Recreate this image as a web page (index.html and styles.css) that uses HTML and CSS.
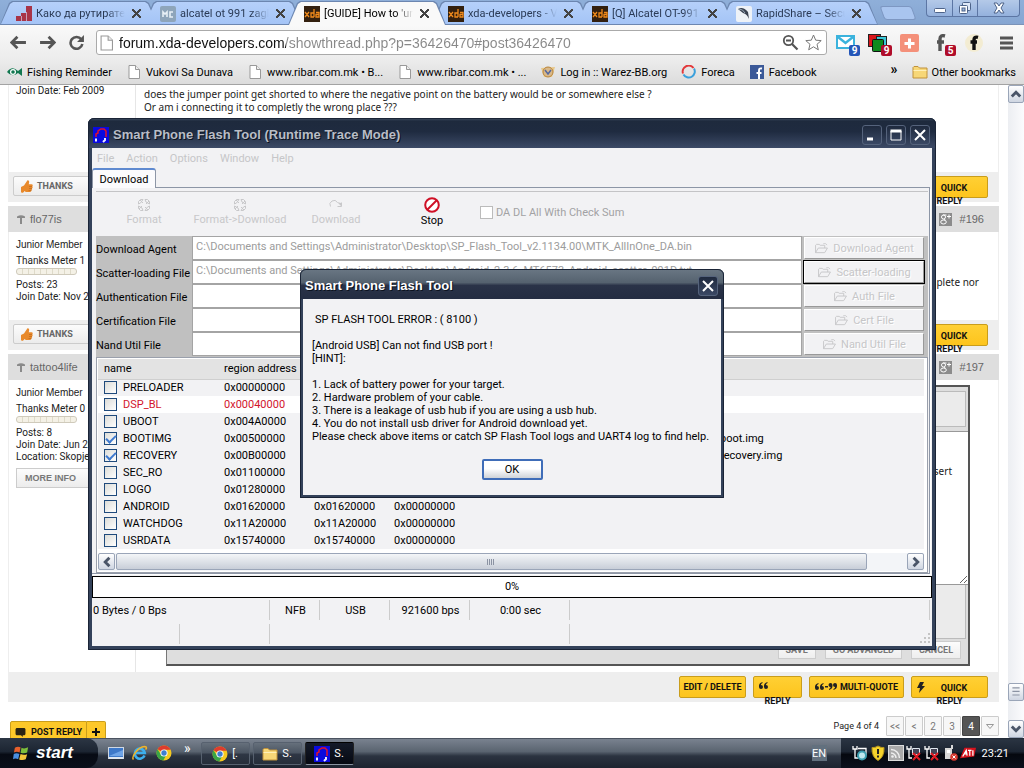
FILE: index.html
```html
<!DOCTYPE html>
<html lang="en">
<head>
    <meta charset="UTF-8">
    <meta name="viewport" content="width=device-width, initial-scale=1.0">
    <title>[GUIDE] How to 'unbrick'</title>
    <link rel="stylesheet" href="styles.css">
</head>
<body>

<svg class="sprites" aria-hidden="true">
    <symbol id="page" viewBox="0 0 12 14">
        <path d="M1 .5h6.500l4 4v9H1z" fill="#fff" stroke="#999"/>
        <path d="M7.500 .5v4h4" fill="#eee" stroke="#999"/>
    </symbol>
    <symbol id="xda" viewBox="0 0 16 16">
        <rect width="16" height="16" fill="#33200f"/>
        <path d="M1 6l4 5M5 6l-4 5M10 3v8M10 7H7v4h3M12 6.500h3V11h-3V8.500h3" fill="none" stroke="#f08a1c" stroke-width="1.300"/>
    </symbol>
    <symbol id="chrome" viewBox="0 0 16 16">
        <circle cx="8" cy="8" r="7.500" fill="#f6c91f"/>
        <path d="M8 8L1.500 4.200A7.500 7.500 0 0 1 14.700 4.700H8z" fill="#de3c2e"/>
        <path d="M1.500 4.200A7.500 7.500 0 0 0 7.300 15.500L10.500 9.500 8 8 4.800 9.300z" fill="#3aa547"/>
        <circle cx="8" cy="8" r="3.600" fill="#fff"/>
        <circle cx="8" cy="8" r="2.700" fill="#3f7fd0"/>
    </symbol>
    <symbol id="flash" viewBox="0 0 16 16">
        <rect width="16" height="16" fill="#0a0adf"/>
        <path d="M3 10V7l2-1V4l3-2h3l2 2v6" fill="none" stroke="#e0122a" stroke-width="1.500"/>
        <path d="M3 11.500v3M12 11v2l-2 2" fill="none" stroke="#e8e8ff" stroke-width="2"/>
    </symbol>
    <symbol id="folder" viewBox="0 0 16 14">
        <path d="M1 2.500l1-1h4l1.500 1.500H15v10H1z" fill="#f7d777" stroke="#c0913a"/>
        <path d="M1.500 5.500h13" stroke="#fff0b8"/>
    </symbol>
    <symbol id="open" viewBox="0 0 16 12">
        <path d="M1.500 10.500v-8l1-1h3l1 1h5v3M1.500 10.500l3-5h10l-3 5zM10 .8c2-.8 3 0 4 1.500" fill="none" stroke="currentColor"/>
    </symbol>
    <symbol id="cycle" viewBox="0 0 14 14">
        <path d="M1.500 6V3.500l2-2H6L3.500 5zM8 1.500h2.500l2 2V6L9 4zM12.500 8v2.500l-2 2H8L10.500 9zM6 12.500H3.500l-2-2V8L5 10z" fill="none" stroke="currentColor"/>
        <path d="M3 2l3 3M12 3L9 6M11 12L8 9M2 11l3-3" stroke="currentColor"/>
    </symbol>
    <symbol id="thumb" viewBox="0 0 12 13">
        <path d="M0 7l3-1.500V12L1 13 0 12zM3 5.500L6.500 .3c2 0 2 2 1.200 4h2.800c1.500 0 1.500 1.500.8 2 .6.700.4 1.700-.3 2 .4.800 0 1.600-.6 1.800.2 1-.4 1.900-1.400 1.900H5L3 11z" fill="#e8892b"/>
        <path d="M8 6.500h3M8 8.500h3M7.500 10.500h3" stroke="#b9641a" stroke-width=".6"/>
    </symbol>
    <symbol id="pin" viewBox="0 0 8 9">
        <path d="M0 1.500Q4 -.8 8 1.500V3H5v6H3V3H0z" fill="#8a8a8a"/>
    </symbol>
    <symbol id="gplus" viewBox="0 0 13 13">
        <rect width="13" height="13" fill="#8c8c8c"/>
        <circle cx="4.500" cy="4" r="2" fill="none" stroke="#fff"/>
        <ellipse cx="4.500" cy="9" rx="2.800" ry="2" fill="none" stroke="#fff"/>
        <path d="M5.500 6l.5 1.200M8 3.500h4M10 1.500v4M4 2h3.500" stroke="#fff"/>
    </symbol>
    <symbol id="net" viewBox="0 0 16 16">
        <path d="M1 1v3h4V1M3 4v9h3" fill="none" stroke="#fff" stroke-width="1.300"/>
        <path d="M6.500 3.500h7v6h-7zM8 12.500h4" fill="#445" stroke="#dfe6ee"/>
        <path d="M7 8l7 7M14 8l-7 7" stroke="#e01a22" stroke-width="2"/>
    </symbol>
    <symbol id="bolt" viewBox="0 0 8 11">
        <path d="M3 0h4L5 4h3L2 11l1-5H0z" fill="#222"/>
    </symbol>
    <symbol id="quote" viewBox="0 0 9 7">
        <path d="M3.500 0C0 1 0 3 0 5a2 2 0 1 0 2-2c0-1 .5-1.500 1.500-2zM8.500 0C5 1 5 3 5 5a2 2 0 1 0 2-2c0-1 .5-1.500 1.500-2z" fill="#222"/>
    </symbol>
</svg>

<div class="desktop">

    <!-- browser -->
    <div class="browser">
        <div class="tabstrip">
            <div class="tab">
                <svg class="favicon" viewBox="0 0 16 16"><path d="M0 10h5v5H0zM5 7h5v8H5zM10 0h6v15h-6z" fill="#a83448"/><path d="M5.500 10v5M10.500 6v9" stroke="#c8a0b8"/></svg>
                <span class="tab-title">Како да рутирате</span>
                <button class="tab-close" aria-label="Close tab"></button>
            </div>
            <div class="tab">
                <svg class="favicon" viewBox="0 0 16 16"><rect width="16" height="16" rx="2" fill="#8ea5ba"/><path d="M3 11V6l2 2 2-2v5M13 6h-3v5h3" fill="none" stroke="#e8f0f6" stroke-width="1.600"/></svg>
                <span class="tab-title">alcatel ot 991 zagl</span>
                <button class="tab-close" aria-label="Close tab"></button>
            </div>
            <div class="tab active">
                <svg class="favicon"><use href="#xda"/></svg>
                <span class="tab-title">[GUIDE] How to 'un</span>
                <button class="tab-close" aria-label="Close tab"></button>
            </div>
            <div class="tab">
                <svg class="favicon"><use href="#xda"/></svg>
                <span class="tab-title">xda-developers - V</span>
                <button class="tab-close" aria-label="Close tab"></button>
            </div>
            <div class="tab">
                <svg class="favicon"><use href="#xda"/></svg>
                <span class="tab-title">[Q] Alcatel OT-991</span>
                <button class="tab-close" aria-label="Close tab"></button>
            </div>
            <div class="tab">
                <svg class="favicon" viewBox="0 0 16 16"><rect width="16" height="16" rx="2" fill="#eef2f7"/><path d="M2 3q5-3 10 3l1 7q-2-5-6-6z" fill="#3a4250"/><path d="M3 3q4 0 6 4" stroke="#9ab" fill="none"/></svg>
                <span class="tab-title">RapidShare – Secu</span>
                <button class="tab-close" aria-label="Close tab"></button>
            </div>
            <button class="new-tab" aria-label="New tab"></button>
            <div class="chrome-controls">
                <button aria-label="Minimize"><svg viewBox="0 0 12 12"><rect x=".5" y="6.500" width="11" height="4" rx="1" fill="#fff" stroke="#4d6389"/></svg></button>
                <button aria-label="Restore"><svg viewBox="0 0 12 12"><rect x="3.500" y=".5" width="8" height="8" rx="1" fill="#dfe9f8" stroke="#4d6389"/><rect x=".5" y="3.500" width="8" height="8" rx="1" fill="#fff" stroke="#4d6389"/><rect x="3" y="6" width="3" height="3" fill="#9cb6dd" stroke="#4d6389"/></svg></button>
                <button class="wide" aria-label="Close"><svg viewBox="0 0 12 12"><path d="M1 1h3l2 3 2-3h3L8 6l3 5H8L6 8l-2 3H1l3-5z" fill="#fff" stroke="#4d6389"/></svg></button>
            </div>
        </div>

        <div class="toolbar">
            <button class="nav" aria-label="Back"><svg viewBox="0 0 16 14"><path d="M1.500 7H15M7 1.500L1.500 7 7 12.500" fill="none" stroke="#555" stroke-width="2.600"/></svg></button>
            <button class="nav" aria-label="Forward"><svg viewBox="0 0 16 14"><path d="M1 7h13.500M9 1.500L14.500 7 9 12.500" fill="none" stroke="#555" stroke-width="2.600"/></svg></button>
            <button class="nav" aria-label="Reload"><svg viewBox="0 0 16 14"><path d="M12.500 4A5.600 5.600 0 1 0 13.500 8.500" fill="none" stroke="#555" stroke-width="2.400"/><path d="M15 0v6.500H8.500z" fill="#555"/></svg></button>
            <div class="omnibox">
                <svg class="page-icon"><use href="#page"/></svg>
                <input type="text" aria-label="Address" value="forum.xda-developers.com/showthread.php?p=36426470#post36426470">
                <svg class="omni-icon" viewBox="0 0 17 17"><circle cx="6.500" cy="6.500" r="4.700" fill="none" stroke="#555" stroke-width="1.800"/><path d="M4 6.500h5M10 10l5.500 5.500" stroke="#555" stroke-width="2.200"/></svg>
                <svg class="omni-icon" viewBox="0 0 17 17"><path d="M8.500 1l2.200 5.200 5.500.4-4.200 3.700 1.300 5.500-4.800-3-4.800 3L5 10.300.8 6.600l5.500-.4z" fill="#fff" stroke="#777"/></svg>
            </div>
            <div class="extensions">
                <button aria-label="Mail" class="ext"><svg viewBox="0 0 20 18"><rect x="1" y="2" width="17" height="12" fill="#fff" stroke="#3bb3dd" stroke-width="2"/><path d="M2 3l7.500 6L17 3" fill="none" stroke="#3bb3dd" stroke-width="2.500"/></svg><span class="badge blue">9</span></button>
                <button aria-label="Cards" class="ext"><svg viewBox="0 0 20 18"><rect x=".5" y=".5" width="12" height="12" fill="#d8161c" stroke="#222"/><rect x="8.500" y="2.500" width="10" height="10" fill="#3ac8d8" stroke="#222"/><rect x="4.500" y="5.500" width="11" height="12" rx="1" fill="#0e8a1e" stroke="#111"/></svg><span class="badge red">9</span></button>
                <button aria-label="Add" class="ext"><svg viewBox="0 0 20 18"><rect width="19" height="18" rx="2" fill="#f4907a"/><path d="M9.500 4.500v10M4.500 9.500h10" stroke="#fff" stroke-width="3"/></svg></button>
                <button aria-label="Facebook notifications" class="ext"><svg viewBox="0 0 20 18"><path d="M13 2C9.500 1 8 2.500 8 5v12M5 8h7" fill="none" stroke="#555" stroke-width="3.400"/></svg><span class="badge red">5</span></button>
                <button aria-label="Facebook" class="ext"><svg viewBox="0 0 20 18"><circle cx="10" cy="9" r="9" fill="#f3ecd2"/><path d="M14 3.300C11 2.500 10 4 10 6v10M6.500 8h6.500" fill="none" stroke="#111" stroke-width="3.400"/></svg></button>
                <button aria-label="Menu" class="ext"><svg viewBox="0 0 20 18"><path d="M4 4h13M4 9h13M4 14h13" stroke="#555" stroke-width="3"/></svg></button>
            </div>
        </div>

        <nav class="bookmarks">
            <a href="#"><svg class="bm-icon" viewBox="0 0 16 14"><path d="M0 7q5-7 11-1l4-3v8l-4-3q-6 5-11-1z" fill="#127850"/><circle cx="6" cy="7" r="3" fill="#fff"/><circle cx="6" cy="7" r="1.800" fill="#127850"/></svg>Fishing Reminder</a>
            <a href="#"><svg class="bm-icon"><use href="#page"/></svg>Vukovi Sa Dunava</a>
            <a href="#"><svg class="bm-icon"><use href="#page"/></svg>www.ribar.com.mk • B...</a>
            <a href="#"><svg class="bm-icon"><use href="#page"/></svg>www.ribar.com.mk • ...</a>
            <a href="#"><svg class="bm-icon" viewBox="0 0 16 14"><path d="M1 3l14-1-3 10H4z" fill="#e8c88a"/><circle cx="8" cy="7" r="5" fill="#d9b98a" stroke="#b9853a"/><path d="M5 5l3 4 3-4" fill="none" stroke="#5468a0" stroke-width="1.500"/></svg>Log in :: Warez-BB.org</a>
            <a href="#"><svg class="bm-icon" viewBox="0 0 16 14"><path d="M2 8.500A6 6 0 0 1 12.500 3" fill="none" stroke="#e2383b" stroke-width="2"/><path d="M13 3.500A6 6 0 0 1 2.500 9.500" fill="none" stroke="#3aa0dc" stroke-width="2"/></svg>Foreca</a>
            <a href="#"><svg class="bm-icon" viewBox="0 0 14 14"><rect width="14" height="14" fill="#3b5998"/><path d="M12 3.500C9.500 3 9 4 9 6v8M6.500 8h5" fill="none" stroke="#fff" stroke-width="2"/></svg>Facebook</a>
            <button class="more">»</button>
            <a href="#" class="other"><svg class="bm-icon"><use href="#folder"/></svg>Other bookmarks</a>
        </nav>

        <div class="viewport">
            <main class="forum">
                <article class="post">
                    <div class="post-body first">
                        <div class="user"><p>Join Date: Feb 2009</p></div>
                        <div class="message">does the jumper point get shorted to where the negative point on the battery would be or somewhere else ?<br>Or am i connecting it to completly the wrong place ???</div>
                    </div>
                    <footer class="post-foot">
                        <button class="thanks"><svg><use href="#thumb"/></svg>THANKS</button>
                        <a href="#" class="btn quick"><svg><use href="#bolt"/></svg>QUICK REPLY</a>
                    </footer>
                </article>

                <article class="post">
                    <header class="post-head"><svg class="pin"><use href="#pin"/></svg>flo77is<span class="spacer"></span><svg class="gplus"><use href="#gplus"/></svg><a href="#">#196</a></header>
                    <div class="post-body middle">
                        <div class="user">
                            <p class="rank">Junior Member</p>
                            <p class="meter-label">Thanks Meter 1</p>
                            <div class="meter"></div>
                            <p>Posts: 23</p>
                            <p>Join Date: Nov 2011</p>
                        </div>
                        <div class="message right">is not complete nor</div>
                    </div>
                    <footer class="post-foot">
                        <button class="thanks"><svg><use href="#thumb"/></svg>THANKS</button>
                        <a href="#" class="btn quick"><svg><use href="#bolt"/></svg>QUICK REPLY</a>
                    </footer>
                </article>

                <article class="post">
                    <header class="post-head"><svg class="pin"><use href="#pin"/></svg>tattoo4life<span class="spacer"></span><svg class="gplus"><use href="#gplus"/></svg><a href="#">#197</a></header>
                    <div class="post-body last">
                        <div class="user">
                            <p class="rank">Junior Member</p>
                            <p class="meter-label">Thanks Meter 0</p>
                            <div class="meter"></div>
                            <p>Posts: 8</p>
                            <p>Join Date: Jun 2010</p>
                            <p>Location: Skopje</p>
                            <button class="more-info">MORE INFO</button>
                        </div>
                        <div class="editor">
                            <div class="editor-tools"></div>
                            <textarea aria-label="Message">


insert</textarea>
                            <div class="editor-options"></div>
                            <div class="editor-actions">
                                <button>SAVE</button>
                                <button>GO ADVANCED</button>
                                <button>CANCEL</button>
                            </div>
                        </div>
                    </div>
                    <footer class="post-foot">
                        <span class="spacer"></span>
                        <a href="#" class="btn edit">EDIT / DELETE</a>
                        <a href="#" class="btn reply"><svg class="q"><use href="#quote"/></svg>REPLY</a>
                        <a href="#" class="btn multi"><svg class="qq" viewBox="0 0 22 7"><path d="M3.500 0C0 1 0 3 0 5a2 2 0 1 0 2-2c0-1 .5-1.500 1.500-2zM8.500 0C5 1 5 3 5 5a2 2 0 1 0 2-2c0-1 .5-1.500 1.500-2zM10 3h3v1.500h-3zM14 7c3.500-1 3.500-3 3.500-5a2 2 0 1 0-2 2c0 1-.5 1.500-1.500 2zM18.500 7c3.500-1 3.500-3 3.500-5a2 2 0 1 0-2 2c0 1-.5 1.500-1.500 2z" fill="#222"/></svg>MULTI-QUOTE</a>
                        <a href="#" class="btn quick"><svg><use href="#bolt"/></svg>QUICK REPLY</a>
                    </footer>
                </article>

                <div class="thread-foot">
                    <a href="#" class="post-reply"><svg viewBox="0 0 11 10"><path d="M1 0h9l1 1v6l-1 1H8v2L6 8H1L0 7V1z" fill="#2a2414"/></svg>POST REPLY</a>
                    <a href="#" class="post-plus" aria-label="More"><svg viewBox="0 0 8 8"><path d="M4 0v8M0 4h8" stroke="#111" stroke-width="2"/></svg></a>
                    <span class="spacer"></span>
                    <span class="page-of">Page 4 of 4</span>
                    <div class="pages">
                        <a href="#">&lt;&lt;</a>
                        <a href="#">&lt;</a>
                        <a href="#">2</a>
                        <a href="#">3</a>
                        <a href="#" class="current">4</a>
                        <a href="#" aria-label="Jump"><svg viewBox="0 0 8 5"><path d="M.5.5h7L4 4.500z" fill="none" stroke="#999"/></svg></a>
                    </div>
                </div>
            </main>
            <div class="scrollbar">
                <button aria-label="Scroll up"><svg viewBox="0 0 10 10"><path d="M1.500 7L5 3.500 8.500 7" fill="none" stroke="#4a5568" stroke-width="2.400"/></svg></button>
                <button class="thumb" aria-label="Scroll position"><svg viewBox="0 0 10 10"><path d="M2 1.500h6M2 4.500h6M2 7.500h6" stroke="#8b93a3"/></svg></button>
                <button aria-label="Scroll down"><svg viewBox="0 0 10 10"><path d="M1.500 3L5 6.500 8.500 3" fill="none" stroke="#4a5568" stroke-width="2.400"/></svg></button>
            </div>
        </div>
    </div>

    <!-- flash tool -->
    <section class="window tool">
        <header class="titlebar">
            <svg class="app-icon"><use href="#flash"/></svg>
            <h1>Smart Phone Flash Tool (Runtime Trace Mode)</h1>
            <button aria-label="Minimize"><svg viewBox="0 0 12 12"><path d="M1 10h6" stroke="#fff" stroke-width="3"/></svg></button>
            <button aria-label="Maximize"><svg viewBox="0 0 12 12"><path d="M1 2v9h10V2" fill="none" stroke="#fff"/><path d="M.5 2h11" stroke="#fff" stroke-width="3"/></svg></button>
            <button aria-label="Close"><svg viewBox="0 0 12 12"><path d="M1 1l10 10M11 1L1 11" stroke="#fff" stroke-width="2"/></svg></button>
        </header>
        <nav class="menu">
            <button disabled>File</button>
            <button disabled>Action</button>
            <button disabled>Options</button>
            <button disabled>Window</button>
            <button disabled>Help</button>
        </nav>
        <div class="tool-tabs"><button>Download</button></div>
        <div class="panel">
            <div class="actions">
                <button disabled><svg><use href="#cycle"/></svg>Format</button>
                <button disabled><svg><use href="#cycle"/></svg>Format-&gt;Download</button>
                <button disabled><svg viewBox="0 0 14 14"><path d="M1.500 8.500a4 4 0 0 1 7-4" fill="none" stroke="currentColor"/><path d="M8.500 8.500h4v-4" fill="none" stroke="currentColor"/><path d="M8 4l4 4V5z" fill="currentColor"/></svg>Download</button>
                <button class="stop"><svg viewBox="0 0 16 16"><circle cx="8" cy="8" r="6.800" fill="#fff" stroke="#cf1026" stroke-width="2"/><path d="M3.500 12.500l9-9" stroke="#cf1026" stroke-width="2"/></svg>Stop</button>
                <label class="check"><input type="checkbox" disabled>DA DL All With Check Sum</label>
            </div>

            <div class="fields">
                <label for="agent">Download Agent</label>
                <input id="agent" type="text" disabled value="C:\Documents and Settings\Administrator\Desktop\SP_Flash_Tool_v2.1134.00\MTK_AllInOne_DA.bin">
                <button disabled><svg><use href="#open"/></svg>Download Agent</button>
                <label for="scatter">Scatter-loading File</label>
                <input id="scatter" type="text" disabled value="C:\Documents and Settings\Administrator\Desktop\Android_2.3.6_MT6573_Android_scatter_991D.txt">
                <button disabled class="default"><svg><use href="#open"/></svg>Scatter-loading</button>
                <label for="auth">Authentication File</label>
                <input id="auth" type="text" disabled>
                <button disabled><svg><use href="#open"/></svg>Auth File</button>
                <label for="cert">Certification File</label>
                <input id="cert" type="text" disabled>
                <button disabled><svg><use href="#open"/></svg>Cert File</button>
                <label for="nand">Nand Util File</label>
                <input id="nand" type="text" disabled>
                <button disabled><svg><use href="#open"/></svg>Nand Util File</button>
            </div>

            <div class="list">
                <table>
                    <colgroup><col class="c-name"><col class="c-region"><col class="c-begin"><col class="c-end"><col></colgroup>
                    <thead>
                        <tr><th>name</th><th>region address</th><th>begin address</th><th>end address</th><th></th></tr>
                    </thead>
                    <tbody>
                        <tr><td><label><input type="checkbox">PRELOADER</label></td><td>0x00000000</td><td>0x00000000</td><td>0x00000000</td><td></td></tr>
                        <tr class="missing"><td><label><input type="checkbox">DSP_BL</label></td><td>0x00040000</td><td>0x00000000</td><td>0x00000000</td><td></td></tr>
                        <tr><td><label><input type="checkbox">UBOOT</label></td><td>0x004A0000</td><td>0x004A0000</td><td>0x00000000</td><td></td></tr>
                        <tr><td><label><input type="checkbox" checked>BOOTIMG</label></td><td>0x00500000</td><td>0x00500000</td><td>0x00000000</td><td>boot.img</td></tr>
                        <tr><td><label><input type="checkbox" checked>RECOVERY</label></td><td>0x00B00000</td><td>0x00B00000</td><td>0x00000000</td><td>recovery.img</td></tr>
                        <tr><td><label><input type="checkbox">SEC_RO</label></td><td>0x01100000</td><td>0x01100000</td><td>0x00000000</td><td></td></tr>
                        <tr><td><label><input type="checkbox">LOGO</label></td><td>0x01280000</td><td>0x01280000</td><td>0x00000000</td><td></td></tr>
                        <tr><td><label><input type="checkbox">ANDROID</label></td><td>0x01620000</td><td>0x01620000</td><td>0x00000000</td><td></td></tr>
                        <tr><td><label><input type="checkbox">WATCHDOG</label></td><td>0x11A20000</td><td>0x11A20000</td><td>0x00000000</td><td></td></tr>
                        <tr><td><label><input type="checkbox">USRDATA</label></td><td>0x15740000</td><td>0x15740000</td><td>0x00000000</td><td></td></tr>
                    </tbody>
                </table>
                <div class="hscroll">
                    <button aria-label="Scroll left"><svg viewBox="0 0 10 10"><path d="M7 1.500L3.500 5 7 8.500" fill="none" stroke="#4a5568" stroke-width="2.400"/></svg></button>
                    <div class="track"><button class="bar" aria-label="Scroll position"><svg viewBox="0 0 8 8"><path d="M.5 1v6M2.500 1v6M4.500 1v6M6.500 1v6" stroke="#8b93a3"/></svg></button></div>
                    <button aria-label="Scroll right"><svg viewBox="0 0 10 10"><path d="M3 1.500L6.500 5 3 8.500" fill="none" stroke="#4a5568" stroke-width="2.400"/></svg></button>
                </div>
            </div>
        </div>
        <div class="progress">0%</div>
        <div class="status">
            <span class="bytes">0 Bytes / 0 Bps</span>
            <span class="flash">NFB</span>
            <span class="port">USB</span>
            <span class="baud">921600 bps</span>
            <span class="time">0:00 sec</span>
            <span class="rest"></span>
        </div>
        <div class="status lower">
            <span class="chip"></span>
            <span class="dram"></span>
            <span class="path"></span>
            <svg class="grip" viewBox="0 0 12 12"><path d="M8 1h2v2H8zM8 5h2v2H8zM4 5h2v2H4zM8 9h2v2H8zM4 9h2v2H4zM0 9h2v2H0z" fill="#c4c4c4"/></svg>
        </div>
    </section>

    <!-- error box -->
    <section class="window dialog" role="dialog" aria-label="Smart Phone Flash Tool">
        <header class="titlebar">
            <h2>Smart Phone Flash Tool</h2>
            <button aria-label="Close"><svg viewBox="0 0 12 12"><path d="M1 1l10 10M11 1L1 11" stroke="#fff" stroke-width="2"/></svg></button>
        </header>
        <div class="dialog-body">
            <p class="indent">SP FLASH TOOL ERROR : ( 8100 )</p>
            <br>
            <p>[Android USB] Can not find USB port !</p>
            <p>[HINT]:</p>
            <br>
            <p>1. Lack of battery power for your target.</p>
            <p>2. Hardware problem of your cable.</p>
            <p>3. There is a leakage of usb hub if you are using a usb hub.</p>
            <p>4. You do not install usb driver for Android download yet.</p>
            <p>Please check above items or catch SP Flash Tool logs and UART4 log to find help.</p>
            <button class="ok">OK</button>
        </div>
    </section>
</div>

<!-- taskbar -->
<footer class="taskbar">
    <button class="start"><svg viewBox="0 0 18 18"><path d="M2 3q3-2 6-.5L7 8Q4 6.500 1 8z" fill="#e8602c"/><path d="M9 3q3 1.500 7-.5L15 8q-3 1.500-7 .3z" fill="#7ebf3c"/><path d="M.8 9.500q3-1.500 6 0L5.500 15q-3-1.500-5.500 0z" fill="#4a8fe0"/><path d="M8 9.500q3 1.500 7 .3L13.500 15q-3 1.500-7 .3z" fill="#f4c63a"/></svg>start</button>
    <div class="quick-launch">
        <button aria-label="Show desktop"><svg viewBox="0 0 16 16"><rect x=".5" y="2.500" width="15" height="11" fill="#3d78c8" stroke="#cfd8e4"/><path d="M1 11l14-6v6z" fill="#6fa4e6"/><path d="M1 13h14" stroke="#dfe6ee" stroke-width="2"/></svg></button>
        <button aria-label="Internet Explorer"><svg viewBox="0 0 16 16"><path d="M12.500 10.500a5 5 0 1 1 .3-2.500H4" fill="none" stroke="#3db0ee" stroke-width="2.600"/><path d="M1.500 14.500C-1 12 6 2 12.500 1.500c3 0 2 2 1 3" fill="none" stroke="#f0b429" stroke-width="1.500"/></svg></button>
        <button aria-label="Chrome"><svg><use href="#chrome"/></svg></button>
        <button class="expand">»</button>
    </div>
    <div class="tasks">
        <button><svg><use href="#chrome"/></svg>[.</button>
        <button><svg><use href="#folder"/></svg>S.</button>
        <button class="pressed"><svg><use href="#flash"/></svg>S.</button>
    </div>
    <span class="spacer"></span>
    <button class="lang">EN</button>
    <div class="tray">
        <svg viewBox="0 0 16 16"><path d="M1 1v3h4V1M3 4v9h3M6 3.500h8V10" fill="none" stroke="#fff" stroke-width="1.300"/><circle cx="10" cy="10.500" r="4" fill="#bfe8ee" stroke="#3c9fb0" stroke-width="2"/></svg>
        <svg viewBox="0 0 16 16"><path d="M8 1q3 2 6 1.500Q14.500 12 8 15.500 1.500 12 2 2.500 5 3 8 1z" fill="#f5d32c" stroke="#b8961c"/><path d="M8 4v5M8 10.500v2" stroke="#222" stroke-width="2"/></svg>
        <svg viewBox="0 0 16 16"><rect x=".5" y=".5" width="15" height="15" fill="#a9a9a9" stroke="#ddd"/><path d="M3 8a5 5 0 0 1 5 5M3 4.500A8.500 8.500 0 0 1 11.500 13" fill="none" stroke="#eee" stroke-width="1.500"/><circle cx="4.500" cy="11.500" r="1.300" fill="#eee"/></svg>
        <svg><use href="#net"/></svg>
        <svg><use href="#net"/></svg>
        <svg viewBox="0 0 16 16"><path d="M3 3h7v11H3zM9 0h2v4H9z" fill="#d8d8d8"/><path d="M5 5h3v3H5z" fill="#fff"/><circle cx="12" cy="12" r="3.800" fill="#d8392f"/><path d="M10.500 10.500l3 3M13.500 10.500l-3 3" stroke="#fff"/></svg>
        <svg viewBox="0 0 18 16"><path d="M5 2h13l-2 10-9 1-7 1z" fill="#d5131d"/><path d="M3 12l4-7 1 6M4.500 9h3M9 5h4M11 5v6M14.500 5v6" fill="none" stroke="#fff" stroke-width="1.400"/></svg>
        <span class="clock">23:21</span>
    </div>
</footer>

</body>
</html>
```

FILE: styles.css
```css
* {
    box-sizing: border-box;
}
body {
    display: flex;
    flex-direction: column;
    height: 100vh;
    margin: 0;
    overflow: hidden;
    font-family: Roboto, 'Liberation Sans', Arial, sans-serif;
    font-size: 11px;
    color: #000;
    background-color: #fff;
}
button, input, textarea {
    font: inherit;
    color: inherit;
}
button {
    display: flex;
    align-items: center;
    justify-content: center;
    padding: 0;
    border: none;
    background: none;
}
a {
    color: inherit;
    text-decoration: none;
}
p, h1, h2 {
    margin: 0;
}
svg {
    flex: none;
}
.sprites {
    position: absolute;
    width: 0;
    height: 0;
}
.spacer {
    flex: 1;
}
.desktop {
    position: relative;
    flex: 1;
    min-height: 0;
}

/* browser */
.browser {
    display: flex;
    flex-direction: column;
    height: 100%;
}
.tabstrip {
    display: flex;
    flex: none;
    height: 25px;
    background: linear-gradient(#8fafd9, #86a6d2);
    border-bottom: 1px solid #7b93b8;
}
.tab {
    position: relative;
    display: flex;
    align-items: center;
    gap: 4px;
    width: 158px;
    height: 25px;
    padding: 2px 15px 0 16px;
    color: #2a3a55;
}
.tab + .tab {
    margin-left: -14px;
}
.tab::before, .tab::after {
    content: "";
    position: absolute;
    inset: 1px 0 0;
    background-color: #6c86b0;
    clip-path: polygon(0 100%, 9px 2px, 12px 0, calc(100% - 12px) 0, calc(100% - 9px) 2px, 100% 100%);
}
.tab::after {
    inset: 2px 1px 1px;
    background: linear-gradient(#b5d0fa, #a4c4f6);
}
.tab > * {
    position: relative;
    z-index: 2;
}
.tab::after {
    z-index: 1;
}
.tab.active {
    z-index: 3;
    color: #000;
}
.tab.active::after {
    inset: 2px 1px 0;
    background: #f9f9f9;
}
.favicon {
    width: 16px;
    height: 16px;
}
.tab-title {
    flex: 1;
    overflow: hidden;
    white-space: nowrap;
    mask-image: linear-gradient(to right, #000 80%, transparent);
}
.tab-close {
    width: 14px;
    height: 14px;
}
.tab-close::before {
    content: "";
    width: 9px;
    height: 9px;
    background: linear-gradient(45deg, transparent 42%, #444 42%, #444 58%, transparent 58%), linear-gradient(-45deg, transparent 42%, #444 42%, #444 58%, transparent 58%);
}
.new-tab {
    width: 32px;
    height: 14px;
    margin: 6px auto 0 4px;
    border: 1px solid #7d97c2;
    border-radius: 3px;
    background-color: #a9c5ef;
    transform: skewX(20deg);
}
.chrome-controls {
    display: flex;
    height: 17px;
    margin-right: 4px;
    border: 1px solid #5c76a4;
    border-top: none;
    border-radius: 0 0 4px 4px;
    background: linear-gradient(#b4c9e8, #94b1dd);
}
.chrome-controls button {
    width: 25px;
}
.chrome-controls button + button {
    border-left: 1px solid #5c76a4;
}
.chrome-controls .wide {
    width: 42px;
}
.chrome-controls svg {
    width: 12px;
    height: 12px;
}
.toolbar {
    display: flex;
    flex: none;
    align-items: center;
    height: 35px;
    padding: 0 8px 0 9px;
    background: linear-gradient(#f9f9f9, #ececec);
}
.nav {
    width: 18px;
    height: 24px;
    margin-right: 11px;
}
.nav svg {
    width: 17px;
    height: 15px;
}
.omnibox {
    display: flex;
    flex: 1;
    align-items: center;
    gap: 6px;
    height: 25px;
    padding: 0 4px 0 3px;
    border: 1px solid #aaa;
    border-radius: 3px;
    background-color: #fff;
}
.page-icon {
    width: 13px;
    height: 16px;
}
.omnibox input {
    flex: 1;
    min-width: 0;
    padding: 0;
    border: none;
    font-family: 'Liberation Sans', Arial, sans-serif;
    font-size: 14px;
    background: linear-gradient(to right, #111 167px, #888 167px);
    background-clip: text;
    -webkit-background-clip: text;
    color: transparent;
}
.omni-icon {
    width: 17px;
    height: 17px;
}
.extensions {
    display: flex;
    align-items: center;
    gap: 12px;
    margin-left: 9px;
}
.ext {
    position: relative;
    width: 20px;
    height: 20px;
}
.ext svg {
    width: 20px;
    height: 18px;
}
.badge {
    position: absolute;
    right: -4px;
    bottom: -3px;
    width: 11px;
    height: 11px;
    border-radius: 2px;
    font-size: 10px;
    font-weight: bold;
    line-height: 11px;
    color: #fff;
}
.badge.blue {
    background-color: #2456b8;
}
.badge.red {
    background-color: #b00d2a;
}
.bookmarks {
    display: flex;
    flex: none;
    align-items: center;
    gap: 14px;
    height: 25px;
    padding: 0 8px 0 7px;
    border-bottom: 1px solid #a3a3a3;
    background: linear-gradient(#ececec, #dcdcdc);
    white-space: nowrap;
}
.bookmarks a {
    display: flex;
    align-items: center;
    gap: 4px;
}
.bm-icon {
    width: 16px;
    height: 14px;
}
.more {
    margin-left: auto;
    padding-bottom: 6px;
    font-size: 14px;
    font-weight: bold;
}

/* forum page */
.viewport {
    display: flex;
    flex: 1;
    min-height: 0;
    background-color: #fff;
}
.forum {
    flex: 1;
    min-width: 0;
    padding: 0 9px 0 8px;
    overflow: hidden;
    font-size: 10px;
    color: #222;
}
.post {
    margin-bottom: 4px;
}
.post-head {
    display: flex;
    align-items: center;
    height: 26px;
    padding: 0 15px 0 9px;
    background-color: #dedede;
    font-family: 'Liberation Sans', Arial, sans-serif;
    font-size: 11px;
    color: #666;
}
.pin {
    width: 8px;
    height: 9px;
    margin-right: 5px;
}
.gplus {
    width: 13px;
    height: 13px;
    margin-right: 8px;
}
.post-body {
    display: flex;
    border: 1px solid #eee;
    border-width: 0 1px;
}
.first {
    height: 87px;
}
.middle {
    height: 88px;
}
.last {
    height: 292px;
}
.user {
    width: 127px;
    padding: 0 7px;
    border-right: 1px solid #e6e6e6;
    line-height: 12px;
    white-space: nowrap;
}
.middle .user, .last .user {
    padding-top: 7px;
}
.rank {
    font-family: 'Liberation Sans', Arial, sans-serif;
}
.meter-label {
    padding-top: 4px;
}
.meter {
    width: 61px;
    height: 7px;
    margin: 1px 0 4px;
    border: 1px solid #cfcabb;
    border-radius: 3px;
    background: repeating-linear-gradient(to right, #f4f1e6 0, #f4f1e6 5px, #dedac9 5px, #dedac9 6px);
}
.message {
    flex: 1;
    padding: 3px 8px;
    font-family: 'Noto Sans', sans-serif;
    line-height: 13px;
}
.message.right {
    padding: 44px 19px 0;
    text-align: right;
}
.post-foot {
    display: flex;
    gap: 7px;
    height: 30px;
    padding: 4px 11px 0 5px;
    justify-content: space-between;
    background-color: #eee;
}
.thanks {
    gap: 4px;
    width: 90px;
    height: 20px;
    padding-left: 7px;
    justify-content: flex-start;
    border: 1px solid #ccc;
    border-radius: 2px;
    background: linear-gradient(#fcfcfc, #ececec);
    font-weight: bold;
    font-size: 9px;
    color: #666;
}
.thanks svg {
    width: 12px;
    height: 13px;
}
.btn {
    position: relative;
    height: 22px;
    border: 1px solid #c99d1c;
    border-radius: 2px;
    background: linear-gradient(#ffd034, #fdc41d);
    font-size: 9px;
    font-weight: bold;
    line-height: 13px;
    text-align: center;
    color: #111;
}
.btn svg {
    position: absolute;
    top: 5px;
    left: 5px;
    width: 8px;
    height: 11px;
}
.quick {
    width: 77px;
    padding: 5px 18px 0;
    text-indent: 9px;
}
.edit {
    width: 67px;
    padding-top: 4px;
    white-space: nowrap;
}
.reply {
    width: 49px;
    padding-top: 18px;
}
.btn .q {
    width: 9px;
    height: 7px;
}
.multi {
    width: 95px;
    padding: 4px 0 0 25px;
    white-space: nowrap;
}
.btn .qq {
    top: 6px;
    width: 22px;
    height: 7px;
}
.more-info {
    width: 100px;
    height: 20px;
    margin-top: 5px;
    padding-left: 8px;
    justify-content: flex-start;
    border: 1px solid #ccc;
    background: linear-gradient(#fcfcfc, #ececec);
    font-family: 'Liberation Sans', Arial, sans-serif;
    font-size: 9px;
    font-weight: bold;
    color: #777;
}
.editor {
    display: flex;
    flex: 1;
    flex-direction: column;
    height: 281px;
    margin: 5px 28px 0 30px;
    border: 2px solid #555;
    border-left: 1px solid #777;
    background-color: #dedede;
}
.editor-tools {
    height: 36px;
    margin: 4px 2px;
    border: 1px solid #bbb;
    background-color: #ebebeb;
}
.editor textarea {
    display: block;
    width: 100%;
    height: 154px;
    padding: 7px 16px;
    border: 1px solid #999;
    border-width: 1px 0;
    font-family: 'Noto Sans', sans-serif;
    text-align: right;
    line-height: 13px;
}
.editor-options {
    height: 54px;
    margin: 0 2px 1px;
    border: 1px solid #bbb;
    border-top: none;
    background-color: #ebebeb;
}
.editor-actions {
    display: flex;
    justify-content: flex-end;
    gap: 9px;
    padding: 1px 7px;
}
.editor-actions button {
    height: 18px;
    padding: 0 7px;
    border: 1px solid #ccc;
    background: linear-gradient(#fcfcfc, #eee);
    font-size: 9px;
    font-weight: bold;
    color: #777;
}
.thread-foot {
    display: flex;
    height: 40px;
    padding: 10px 0 0 2px;
}
.post-reply, .post-plus {
    display: flex;
    align-items: center;
    justify-content: center;
    height: 22px;
    margin-top: 5px;
    border: 1px solid #c99d1c;
    border-radius: 2px 0 0 0;
    background-color: #fdc829;
    font-size: 9px;
    font-weight: bold;
    color: #111;
}
.post-reply {
    gap: 5px;
    width: 77px;
    white-space: nowrap;
}
.post-reply svg {
    width: 11px;
    height: 9px;
}
.post-plus {
    width: 19px;
    border-left: none;
    border-radius: 0 2px 0 0;
}
.post-plus svg {
    width: 8px;
    height: 8px;
}
.page-of {
    margin-right: 7px;
    line-height: 20px;
    font-size: 9px;
}
.pages {
    display: flex;
    gap: 1px;
}
.pages a {
    display: flex;
    align-items: center;
    justify-content: center;
    width: 18px;
    height: 20px;
    border: 1px solid #ccc;
    border-radius: 1px;
    background-color: #f7f7f7;
    color: #777;
}
.pages .current {
    border-color: #444;
    background-color: #555;
    color: #fff;
}
.pages svg {
    width: 8px;
    height: 5px;
}
.scrollbar {
    display: flex;
    flex-direction: column;
    width: 16px;
    background: linear-gradient(to right, #eceef2, #fbfbfd);
}
.scrollbar button, .hscroll button {
    height: 18px;
    border: 1px solid #9aa5b8;
    border-radius: 2px;
    background: linear-gradient(#fff, #cfd6e2);
}
.scrollbar svg, .hscroll svg {
    width: 12px;
    height: 12px;
}
.scrollbar .thumb {
    margin: auto 0 19px;
}

/* windows on the desktop */
.window {
    position: absolute;
    border: 4px solid #34425a;
    border-top: none;
    border-radius: 6px 6px 0 0;
    outline: 1px solid #1a2436;
    outline-offset: -1px;
    background-color: #f2f2f4;
}
.titlebar {
    display: flex;
    align-items: center;
    gap: 4px;
    height: 30px;
    margin: 0 -4px;
    padding: 3px 6px 0 5px;
    border-radius: 6px 6px 0 0;
    background: linear-gradient(#45546a 0, #1e2a3d 3px, #1f2b40 45%, #3c4a66 100%);
    color: #b9bdc6;
}
.titlebar h1, .titlebar h2 {
    flex: 1;
    font-family: 'Liberation Sans', Arial, sans-serif;
    font-size: 13px;
    font-weight: bold;
    text-shadow: 1px 1px #0c1320;
}
.app-icon {
    width: 16px;
    height: 16px;
}
.titlebar button {
    width: 20px;
    height: 20px;
    border: 1px solid #55637c;
    border-radius: 3px;
    background: linear-gradient(#1f2a3e, #3a4864);
}
.titlebar button svg {
    width: 12px;
    height: 12px;
}
.tool {
    top: 118px;
    right: 88px;
    left: 88px;
}
.menu {
    display: flex;
    gap: 12px;
    height: 20px;
    padding: 0 5px;
    color: #c6c6c8;
}
.tool-tabs {
    display: flex;
    height: 20px;
}
.tool-tabs button {
    width: 64px;
    border: 1px solid #8d96a6;
    border-top: 2px solid #5f8ad0;
    border-bottom: none;
    border-radius: 3px 3px 0 0;
    background-color: #fbfbfd;
}
.tool-tabs::after {
    content: "";
    flex: 1;
    margin-right: 2px;
    border-bottom: 1px solid #8d96a6;
}
.panel {
    margin-right: 2px;
    padding: 3px 1px 0 4px;
    border-right: 1px solid #8d96a6;
    border-bottom: 1px solid #8d96a6;
    box-shadow: 1px 1px #fff;
}
.actions {
    display: flex;
    height: 45px;
    border-top: 1px solid #c4c4c6;
}
.actions button {
    flex-direction: column;
    gap: 1px;
    width: 96px;
    padding-bottom: 4px;
    color: #c8c8ca;
}
.actions svg {
    width: 14px;
    height: 14px;
}
.actions .stop {
    color: #000;
}
.actions .stop svg {
    width: 16px;
    height: 16px;
}
.check {
    display: flex;
    align-items: center;
    gap: 3px;
    height: 40px;
    color: #a2a2a4;
}
input[type="checkbox"] {
    display: grid;
    place-content: center;
    width: 13px;
    height: 13px;
    margin: 0;
    border: 1px solid #1f4a7c;
    background: linear-gradient(135deg, #dcdcd8, #fff);
    appearance: none;
}
input[type="checkbox"]:checked::before {
    content: "";
    width: 8px;
    height: 4px;
    margin-bottom: 2px;
    border: solid #3f7ad0;
    border-width: 0 0 2px 2px;
    transform: rotate(-45deg);
}
input[type="checkbox"]:disabled {
    border-color: #bbb;
    background: #fff;
}
.fields {
    display: grid;
    grid-template-columns: 97px 1fr 120px;
    grid-auto-rows: 22px;
    row-gap: 2px;
    padding: 1px 4px 2px 0;
    background-color: #c0c0c0;
}
.fields label {
    padding-top: 6px;
    white-space: nowrap;
}
.fields input {
    margin-right: 3px;
    padding: 0 2px 4px;
    border: 1px solid #fff;
    outline: 1px solid #a4a4a4;
    background-color: #fff;
    color: #9c9c9c;
}
.fields button {
    gap: 4px;
    border: 1px solid #fff;
    border-right-color: #999;
    border-bottom-color: #999;
    background-color: #f2f2f4;
    color: #c6c6c8;
    text-shadow: 1px 1px #fff;
}
.fields button.default {
    outline: 1px solid #000;
}
.fields button svg {
    width: 15px;
    height: 11px;
}
.list {
    padding: 1px 3px 1px 1px;
    border: 1px solid #9aa0ac;
    background-color: #fff;
}
table {
    width: 100%;
    table-layout: fixed;
    border-collapse: collapse;
    background-color: #f2f2f4;
}
.c-name {
    width: 120px;
}
.c-region {
    width: 90px;
}
.c-begin {
    width: 80px;
}
.c-end {
    width: 326px;
}
th, td {
    height: 17px;
    padding: 0 6px;
    font-weight: normal;
    text-align: left;
    white-space: nowrap;
}
th {
    height: 20px;
    border-bottom: 1px solid #cfcfcf;
    background-color: #e3e3e3;
}
td label {
    display: flex;
    align-items: center;
    gap: 6px;
}
.missing {
    background-color: #fff;
    color: #d2142c;
}
.hscroll {
    display: flex;
    gap: 1px;
    height: 18px;
    margin-top: 4px;
    background-color: #f3f5f8;
}
.hscroll button {
    width: 17px;
    height: 17px;
}
.track {
    flex: 1;
}
.track .bar {
    width: 95%;
    background: linear-gradient(#f4f6f8, #c8ced8);
}
.track .bar svg {
    width: 8px;
    height: 8px;
}
.progress {
    height: 22px;
    margin-top: 2px;
    border: 1px solid #000;
    background-color: #fff;
    line-height: 20px;
    text-align: center;
}
.status {
    display: flex;
    gap: 2px;
    height: 24px;
    padding: 2px 0;
    line-height: 22px;
    text-align: center;
}
.status span {
    border-right: 1px solid #ccc;
}
.bytes {
    width: 178px;
    padding-left: 1px;
    text-align: left;
}
.flash {
    width: 48px;
}
.port {
    width: 68px;
}
.baud {
    width: 78px;
}
.time {
    width: 98px;
}
.rest {
    flex: 1;
    margin-right: 2px;
}
.chip, .dram {
    width: 88px;
}
.path {
    width: 298px;
}
.grip {
    width: 12px;
    height: 12px;
    margin: auto 0 0 auto;
}
.dialog {
    top: 269px;
    right: 300px;
    left: 300px;
    border-width: 3px;
}
.dialog .titlebar {
    margin: 0 -3px;
    background: linear-gradient(#6a7784 0, #55626f 45%, #2a3348 55%, #242d42 100%);
    color: #fff;
}
.dialog-body {
    padding: 14px 9px 15px;
    line-height: 13px;
    white-space: nowrap;
}
.dialog .indent {
    padding-left: 3px;
}
.ok {
    width: 61px;
    height: 21px;
    margin: 16px auto 0;
    border: 2px solid #3f6db8;
    border-radius: 2px;
    background: linear-gradient(#fff, #fff 45%, #cfd3d8);
}

/* taskbar */
.taskbar {
    display: flex;
    flex: none;
    align-items: stretch;
    height: 30px;
    background: linear-gradient(#1c2430 0, #79828f 1px, #5a6470 45%, #2b3340 60%, #1d2430);
    color: #fff;
}
.start {
    gap: 6px;
    width: 98px;
    padding-right: 12px;
    border-radius: 0 12px 12px 0;
    background: linear-gradient(#2c3644, #1c2532 45%, #070b14 55%, #0a0f1a);
    font-family: 'Liberation Sans', Arial, sans-serif;
    font-size: 17px;
    font-style: italic;
    font-weight: bold;
}
.start svg {
    width: 17px;
    height: 17px;
}
.quick-launch {
    display: flex;
    align-items: center;
    gap: 8px;
    padding: 0 10px;
}
.quick-launch svg, .tasks svg, .tray svg {
    width: 16px;
    height: 16px;
}
.expand {
    margin-left: 4px;
    padding-bottom: 10px;
    font-size: 14px;
}
.tasks {
    display: flex;
    gap: 3px;
    padding: 4px 0 3px;
}
.tasks button {
    gap: 4px;
    width: 49px;
    border: 1px solid #57616f;
    border-radius: 2px;
    background: linear-gradient(#66707c, #4c5663 45%, #2e3644 55%, #262e3a);
}
.tasks .pressed {
    border-color: #000 #222 #8a93a0;
    background: linear-gradient(#141a28, #060912);
}
.lang {
    width: 15px;
    height: 16px;
    margin: auto 14px auto 0;
    background-color: #62707e;
}
.tray {
    display: flex;
    align-items: center;
    gap: 2px;
    padding: 0 15px 0 11px;
    background: linear-gradient(#1c2430 0, #2a3442 1px, #1c2532 45%, #05080f 55%, #0b101c);
}
.clock {
    margin-left: 4px;
}
```
